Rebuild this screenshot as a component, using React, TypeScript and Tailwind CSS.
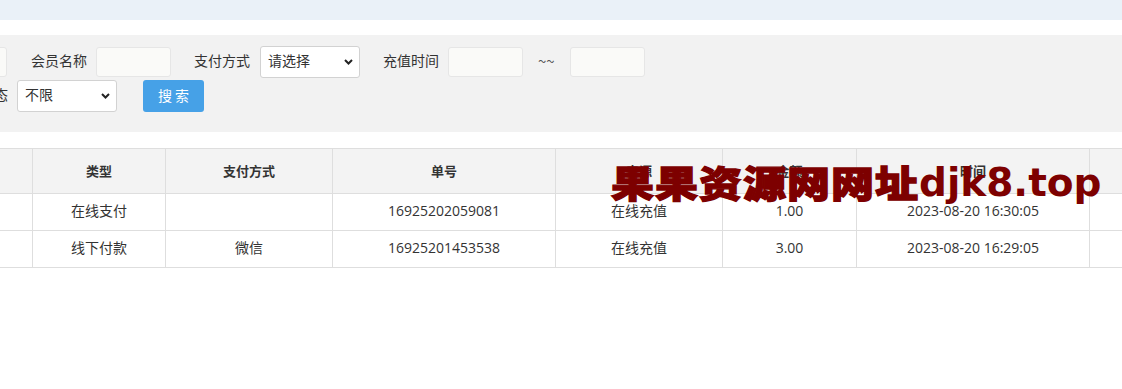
import React from "react";

const font = { fontFamily: '"Noto Sans CJK SC", "Noto Sans", sans-serif' };
const numFont = { fontFamily: '"Open Sans", "Noto Sans CJK SC", sans-serif' };

function Chevron() {
  return (
    <svg
      className="pointer-events-none absolute right-[7px] top-1/2 -translate-y-1/2"
      width="9"
      height="6"
      viewBox="0 0 9 6"
    >
      <path d="M1 1 L4.5 4.5 L8 1" fill="none" stroke="#222" strokeWidth="2" />
    </svg>
  );
}

function Select({ text }: { text: string }) {
  return (
    <div className="relative h-[32px] w-[100px] shrink-0">
      <select
        className="h-full w-full appearance-none rounded-[3px] border border-[#d2d2d2] bg-white pb-[3px] pl-[7px] text-[14px] text-[#333] outline-none"
        style={font}
        defaultValue={text}
      >
        <option>{text}</option>
      </select>
      <Chevron />
    </div>
  );
}

function Input({ cls = "" }: { cls?: string }) {
  return (
    <input
      className={
        "h-[30px] w-[75px] shrink-0 rounded-[3px] border border-[#e6e6e6] bg-[#fafaf8] outline-none " +
        cls
      }
    />
  );
}

const cols = [100, 133, 167, 223, 167, 134, 233, 150];
const headers = ["", "类型", "支付方式", "单号", "来源", "金额", "时间", ""];
const rows = [
  ["", "在线支付", "", "16925202059081", "在线充值", "1.00", "2023-08-20 16:30:05", ""],
  ["", "线下付款", "微信", "16925201453538", "在线充值", "3.00", "2023-08-20 16:29:05", ""],
];
const numeric = [3, 5, 6];

export default function App() {
  return (
    <div
      className="relative h-[389px] w-[1122px] overflow-hidden bg-white text-[#333]"
      style={font}
    >
      <div className="h-[20px] bg-[#eaf1f8]" />
      <div className="h-[15px] bg-white" />
      <div className="bg-[#f2f2f2] pb-[20px] pt-[11px]">
        <div className="-ml-[68px] flex h-[32px] items-center text-[14px]">
          <Input />
          <span className="mb-[3px] ml-[24px] whitespace-nowrap">会员名称</span>
          <Input cls="ml-[9px]" />
          <span className="mb-[3px] ml-[23px] whitespace-nowrap">支付方式</span>
          <div className="ml-[10px]">
            <Select text="请选择" />
          </div>
          <span className="mb-[3px] ml-[23px] whitespace-nowrap">充值时间</span>
          <Input cls="ml-[9px]" />
          <span className="mb-[2px] ml-[15px] text-[15px] text-[#555]">~~</span>
          <Input cls="ml-[15px]" />
        </div>
        <div className="-ml-[48px] mt-[2px] flex h-[32px] items-center text-[14px]">
          <span className="mb-[3px] whitespace-nowrap">充值状态</span>
          <div className="ml-[9px]">
            <Select text="不限" />
          </div>
          <button className="ml-[26px] h-[32px] w-[61px] rounded-[3px] bg-[#46a1e7] pb-[2px] text-[14px] text-white">
            搜 索
          </button>
        </div>
      </div>
      <div className="mt-[16px]">
        <table
          className="-ml-[68px] table-fixed border-collapse"
          style={{ width: cols.reduce((a, b) => a + b, 0) }}
        >
          <colgroup>
            {cols.map((w, i) => (
              <col key={i} style={{ width: w }} />
            ))}
          </colgroup>
          <thead>
            <tr className="h-[45px] bg-[#f3f3f3]">
              {headers.map((h, i) => (
                <th
                  key={i}
                  className="border border-[#dedede] text-center text-[13px] font-bold leading-[20px] text-[#333]"
                >
                  {h}
                </th>
              ))}
            </tr>
          </thead>
          <tbody>
            {rows.map((r, ri) => (
              <tr key={ri} className="h-[37px]">
                {r.map((c, ci) => {
                  const isNum = numeric.includes(ci);
                  return (
                    <td
                      key={ci}
                      className={
                        "border border-[#dedede] text-center text-[14px] leading-[20px] text-[#333] " +
                        (isNum ? "pb-[3px]" : "pb-[5px]")
                      }
                      style={isNum ? numFont : undefined}
                    >
                      {c}
                    </td>
                  );
                })}
              </tr>
            ))}
          </tbody>
        </table>
      </div>
      <div className="pointer-events-none absolute left-[611px] top-[145px] flex items-baseline whitespace-nowrap text-[#7d0000]">
        <span
          className="inline-block origin-bottom scale-y-[0.86] text-[43px] font-black tracking-[1px] [-webkit-text-stroke:1.5px_#7d0000]"
          style={{ fontFamily: '"Noto Sans CJK SC", sans-serif' }}
        >
          果果资源网网址
        </span>
        <span
          className="text-[39px] font-bold"
          style={{ fontFamily: '"DejaVu Sans", sans-serif' }}
        >
          djk8.top
        </span>
      </div>
    </div>
  );
}
